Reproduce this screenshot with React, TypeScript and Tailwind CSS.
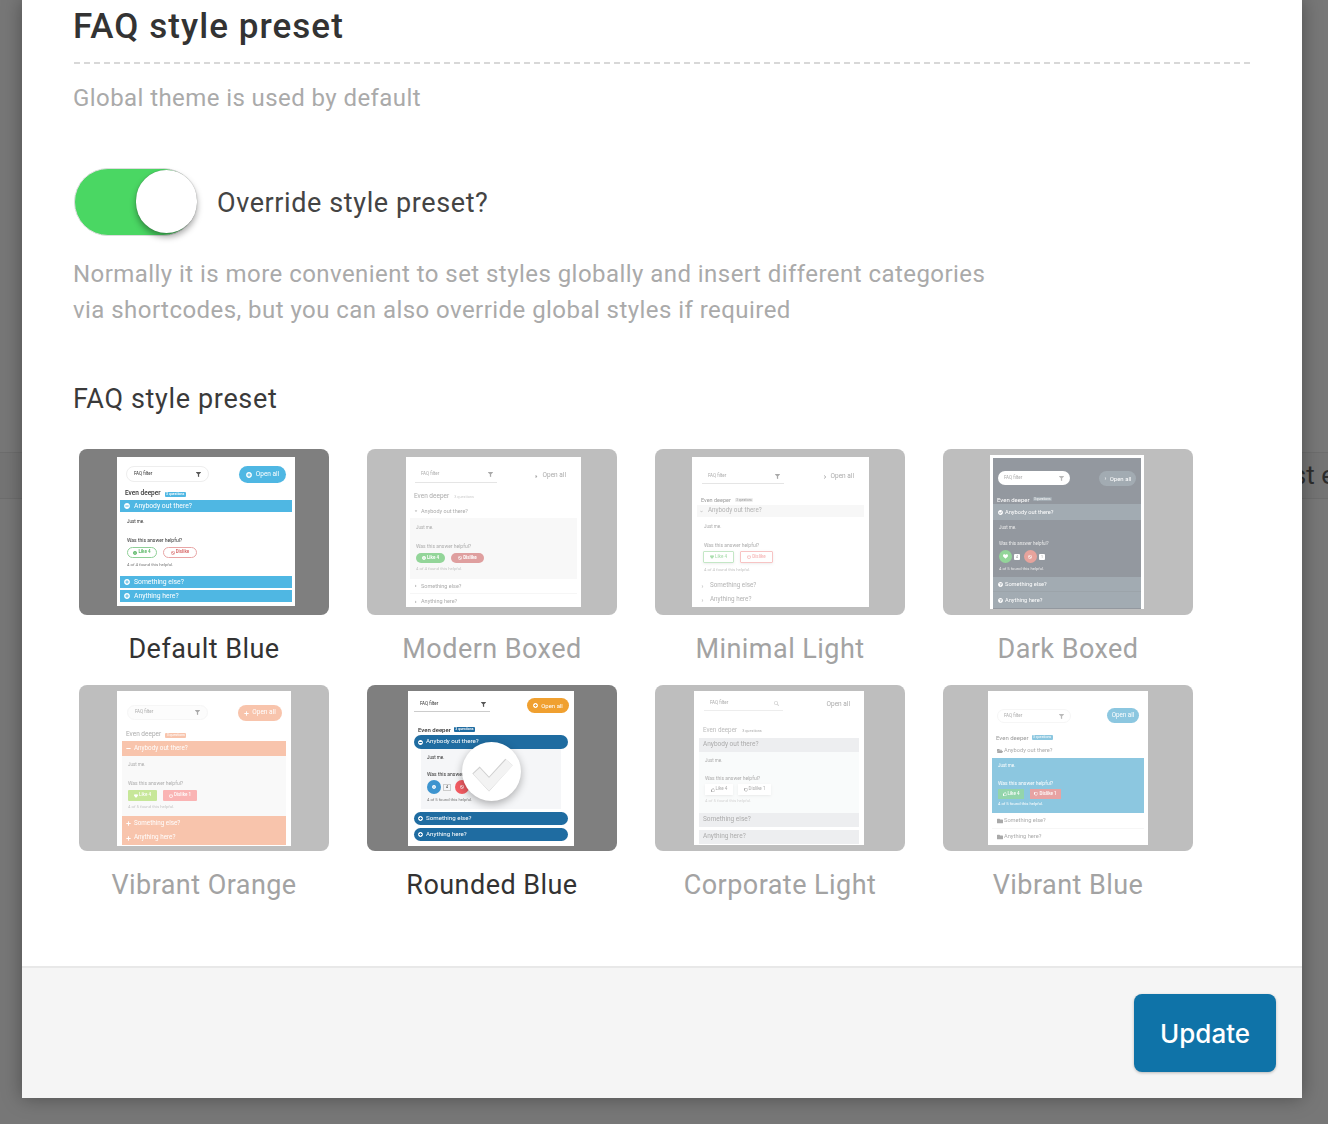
import type { ReactNode } from "react";
import {
  FaBan,
  FaCaretDown,
  FaCaretRight,
  FaCheckCircle,
  FaChevronDown,
  FaChevronRight,
  FaFilter,
  FaFolder,
  FaFolderOpen,
  FaHeart,
  FaMinus,
  FaMinusCircle,
  FaPlus,
  FaPlusCircle,
  FaPowerOff,
  FaQuestionCircle,
  FaRegThumbsDown,
  FaRegThumbsUp,
  FaSearch,
  FaSmile,
} from "react-icons/fa";

type BoxProps = { className?: string; children?: ReactNode };

// one line of small text inside a preview
const Tx = ({ className = "", children }: BoxProps) => (
  <div className={`h-[6px] leading-[6px] whitespace-nowrap ${className}`}>{children}</div>
);

// horizontal row: accordion bars, buttons, filters
const Row = ({ className = "", children }: BoxProps) => (
  <div className={`flex items-center whitespace-nowrap ${className}`}>{children}</div>
);

function Tile({ label, active, className, children }: { label: string; active?: boolean; className: string; children: ReactNode }) {
  return (
    <div className="w-[250px]">
      <div className={`relative h-[166px] overflow-hidden rounded-lg bg-[#7f7f7f] blur-[0.3px] ${active ? "" : "opacity-50"} ${className}`}>
        {children}
      </div>
      <div className={`mt-[19px] text-center text-[27px] leading-[30px] tracking-[0.45px] ${active ? "text-[#333]" : "text-[#a3a3a3]"}`}>
        {label}
      </div>
    </div>
  );
}

function DefaultBlue() {
  return (
    <div className="h-[149px] w-[178px] bg-white pt-[9px] text-[#333]">
      <div className="flex pr-[9px] pl-[9px]">
        <Row className="h-[16px] w-[83px] justify-between rounded-full border border-[#eee] px-[7px] text-[4.5px]">
          FAQ filter <FaFilter size={5} className="text-[#555]" />
        </Row>
        <Row className="ml-auto h-[17px] w-[47px] justify-center gap-[4px] rounded-full bg-[#4fb7e3] text-[6.5px] text-white">
          <FaPlusCircle size={6} /> Open all
        </Row>
      </div>
      <Row className="mt-[7px] h-[8px] gap-[4px] pl-[8px] text-[6.5px] font-medium">
        Even deeper <span className="rounded-[1px] bg-[#4fb7e3] px-[1.5px] text-[3.5px] leading-[5px] text-white">3 questions</span>
      </Row>
      <Row className="mx-[3px] mt-[2px] h-[12px] gap-[4px] bg-[#4fb7e3] pl-[4px] text-[6.8px] text-white">
        <FaMinusCircle size={6} /> Anybody out there?
      </Row>
      <Tx className="mt-[7px] pl-[10px] text-[4.5px]">Just me.</Tx>
      <Tx className="mt-[12px] pl-[10px] text-[5px]">Was this answer helpful?</Tx>
      <div className="mt-[4px] flex gap-[6px] pl-[10px] text-[4.5px] font-bold">
        <Row className="h-[11px] w-[30px] justify-center gap-[1px] rounded-full border border-[#8fd097] text-[#5cb868]">
          <FaSmile size={4} /> Like 4
        </Row>
        <Row className="h-[11px] w-[34px] justify-center gap-[1px] rounded-full border border-[#e8a5a5] text-[#d97070]">
          <FaBan size={4} /> Dislike
        </Row>
      </div>
      <Tx className="mt-[4px] pl-[10px] text-[4.3px] text-[#777]">4 of 4 found this helpful.</Tx>
      <Row className="mx-[3px] mt-[8px] h-[12px] gap-[4px] bg-[#4fb7e3] pl-[4px] text-[6.8px] text-white">
        <FaPlusCircle size={6} /> Something else?
      </Row>
      <Row className="mx-[3px] mt-[2px] h-[12px] gap-[4px] bg-[#4fb7e3] pl-[4px] text-[6.8px] text-white">
        <FaPlusCircle size={6} /> Anything here?
      </Row>
    </div>
  );
}

function ModernBoxed() {
  return (
    <div className="h-[150px] w-[175px] bg-white pt-[10px] text-[#555]">
      <div className="flex pr-[15px] pl-[9px]">
        <Row className="h-[16px] w-[82px] justify-between border-b border-[#ccc] pr-[4px] pl-[6px] text-[4.5px]">
          FAQ filter <FaFilter size={5} />
        </Row>
        <Row className="ml-auto h-[18px] gap-[4px] text-[6.5px]">
          <FaCaretRight size={5} /> Open all
        </Row>
      </div>
      <Row className="mt-[8px] h-[8px] gap-[5px] pl-[8px] text-[6.5px]">
        Even deeper <span className="text-[3.8px] text-[#999]">3 questions</span>
      </Row>
      <Row className="mt-[3px] h-[14px] gap-[3px] pl-[8px] text-[5.5px]">
        <FaCaretDown size={4} /> Anybody out there?
      </Row>
      <div className="mx-[4px] h-[61px] bg-[#f3f3f3] pt-[7px] pl-[6px]">
        <Tx className="text-[4.5px]">Just me.</Tx>
        <Tx className="mt-[12px] text-[5px]">Was this answer helpful?</Tx>
        <div className="mt-[4px] flex gap-[6px] text-[4.5px] font-bold text-white">
          <Row className="h-[10px] w-[29px] justify-center gap-[1px] rounded-full bg-[#29ad35]">
            <FaSmile size={4} /> Like 4
          </Row>
          <Row className="h-[10px] w-[33px] justify-center gap-[1px] rounded-full bg-[#c14141]">
            <FaBan size={4} /> Dislike
          </Row>
        </div>
        <Tx className="mt-[3px] text-[4.3px] text-[#888]">4 of 4 found this helpful.</Tx>
      </div>
      <Row className="mx-[4px] h-[15px] gap-[3px] border-b border-[#eee] pl-[4px] text-[5.5px]">
        <FaCaretRight size={4} /> Something else?
      </Row>
      <Row className="mx-[4px] h-[15px] gap-[3px] pl-[4px] text-[5.5px]">
        <FaCaretRight size={4} /> Anything here?
      </Row>
    </div>
  );
}

function MinimalLight() {
  return (
    <div className="h-[150px] w-[177px] bg-white pt-[12px] text-[#555]">
      <div className="flex pr-[15px] pl-[10px]">
        <Row className="h-[15px] w-[82px] justify-between border-b border-[#ccc] pr-[4px] pl-[6px] text-[4.5px]">
          FAQ filter <FaFilter size={5} />
        </Row>
        <Row className="ml-auto h-[16px] gap-[4px] text-[6.5px]">
          <FaChevronRight size={4} /> Open all
        </Row>
      </div>
      <Row className="mt-[11px] h-[8px] gap-[4px] pl-[9px] text-[5.5px] text-[#333]">
        Even deeper <span className="rounded-[1px] bg-[#ddd] px-[1.5px] text-[3px] leading-[4px]">3 questions</span>
      </Row>
      <Row className="mx-[5px] mt-[1px] h-[12px] gap-[5px] bg-[#f0f0f0] pl-[3px] text-[6.3px] text-[#666]">
        <FaChevronDown size={3} /> Anybody out there?
      </Row>
      <Tx className="mt-[7px] pl-[12px] text-[4.5px]">Just me.</Tx>
      <Tx className="mt-[12px] pl-[12px] text-[5px]">Was this answer helpful?</Tx>
      <div className="mt-[3px] flex gap-[6px] pl-[11px] text-[4.5px] font-medium">
        <Row className="h-[12px] w-[31px] justify-center gap-[1px] rounded-[1px] border border-[#8bd08f] text-[#5cc064] shadow-sm">
          <FaHeart size={4} /> Like 4
        </Row>
        <Row className="h-[12px] w-[33px] justify-center gap-[1px] rounded-[1px] border border-[#f08a8a] text-[#ee6a6a] shadow-sm">
          <FaPowerOff size={4} /> Dislike
        </Row>
      </div>
      <Tx className="mt-[4px] pl-[12px] text-[4.3px] text-[#888]">4 of 4 found this helpful.</Tx>
      <Row className="mt-[7px] h-[12px] gap-[6px] pl-[9px] text-[6.3px] text-[#666]">
        <FaChevronRight size={3} /> Something else?
      </Row>
      <Row className="mt-[2px] h-[12px] gap-[6px] pl-[9px] text-[6.3px] text-[#666]">
        <FaChevronRight size={3} /> Anything here?
      </Row>
    </div>
  );
}

function DarkBoxed() {
  return (
    <div className="w-[154px] border-x-[3px] border-t-[3px] border-white bg-[#293341] text-white">
      <div className="h-[151px] pt-[13px]">
        <div className="flex pr-[5px] pl-[5px]">
          <Row className="h-[14px] w-[72px] justify-between rounded-full bg-white px-[6px] text-[4.5px] text-[#555]">
            FAQ filter <FaFilter size={5} className="text-[#777]" />
          </Row>
          <Row className="ml-auto h-[15px] w-[37px] justify-center gap-[3px] rounded-full bg-[#475967] text-[6px]">
            <FaChevronRight size={3} /> Open all
          </Row>
        </div>
        <Row className="mt-[9px] h-[8px] gap-[3px] pl-[4px] text-[6px]">
          Even deeper <span className="rounded-[1px] bg-[#475967] px-[1.5px] text-[3.2px] leading-[4px]">3 questions</span>
        </Row>
        <Row className="mt-[1px] h-[16px] gap-[2px] bg-[#475967] pl-[5px] text-[5.7px]">
          <FaCheckCircle size={5} /> Anybody out there?
        </Row>
        <Tx className="mt-[5px] pl-[6px] text-[4.5px] text-[#ddd]">Just me.</Tx>
        <Tx className="mt-[10px] pl-[6px] text-[4.5px] text-[#ddd]">Was this answer helpful?</Tx>
        <div className="mt-[3px] flex items-center pl-[6px]">
          <Row className="h-[13px] w-[13px] justify-center rounded-full bg-[#29ad35]">
            <FaHeart size={5} />
          </Row>
          <span className="ml-[2px] rounded-[1px] bg-white px-[2px] text-[3.5px] leading-[6px] text-[#333]">4</span>
          <Row className="ml-[4px] h-[13px] w-[13px] justify-center rounded-full bg-[#d14a3c]">
            <FaBan size={4} />
          </Row>
          <span className="ml-[2px] rounded-[1px] bg-white px-[2px] text-[3.5px] leading-[6px] text-[#333]">1</span>
        </div>
        <Tx className="mt-[3px] pl-[6px] text-[4.2px] text-[#ddd]">4 of 5 found this helpful.</Tx>
        <Row className="mt-[5px] h-[15px] gap-[2px] border-b border-[#3c4c58] bg-[#475967] pl-[5px] text-[5.7px]">
          <FaQuestionCircle size={5} /> Something else?
        </Row>
        <Row className="h-[16px] gap-[2px] bg-[#475967] pl-[5px] text-[5.7px]">
          <FaQuestionCircle size={5} /> Anything here?
        </Row>
      </div>
    </div>
  );
}

function VibrantOrange() {
  return (
    <div className="h-[155px] w-[174px] bg-white pt-[14px] text-[#555]">
      <div className="flex pr-[9px] pl-[10px]">
        <Row className="h-[15px] w-[81px] justify-between rounded-full border border-[#eee] bg-[#fafafa] px-[7px] text-[4.5px]">
          FAQ filter <FaFilter size={5} />
        </Row>
        <Row className="ml-auto h-[16px] w-[44px] justify-center gap-[3px] rounded-full bg-[#f38b5b] text-[6.5px] text-white">
          <FaPlus size={5} /> Open all
        </Row>
      </div>
      <Row className="mt-[10px] h-[8px] gap-[4px] pl-[9px] text-[6.5px]">
        Even deeper <span className="rounded-[1px] bg-[#f38b5b] px-[1.5px] text-[3.5px] leading-[5px] text-white">3 questions</span>
      </Row>
      <Row className="mx-[5px] mt-[2px] h-[15px] gap-[3px] bg-[#f38b5b] pl-[4px] text-[6.3px] text-white">
        <FaMinus size={5} /> Anybody out there?
      </Row>
      <div className="mx-[5px] h-[60px] bg-[#f5f5f5] pt-[6px] pl-[6px]">
        <Tx className="text-[4.5px]">Just me.</Tx>
        <Tx className="mt-[12px] text-[5px]">Was this answer helpful?</Tx>
        <div className="mt-[4px] flex gap-[6px] text-[4.5px] font-medium text-white">
          <Row className="h-[11px] w-[29px] justify-center gap-[1px] rounded-[1px] bg-[#91d135]">
            <FaHeart size={4} /> Like 4
          </Row>
          <Row className="h-[11px] w-[34px] justify-center gap-[1px] rounded-[1px] bg-[#f76b6b]">
            <FaPowerOff size={4} /> Dislike 1
          </Row>
        </div>
        <Tx className="mt-[3px] text-[4.3px] text-[#888]">4 of 5 found this helpful.</Tx>
      </div>
      <Row className="mx-[5px] h-[15px] gap-[3px] bg-[#f38b5b] pl-[4px] text-[6.3px] text-white">
        <FaPlus size={5} /> Something else?
      </Row>
      <Row className="mx-[5px] h-[14px] gap-[3px] bg-[#f38b5b] pl-[4px] text-[6.3px] text-white">
        <FaPlus size={5} /> Anything here?
      </Row>
    </div>
  );
}

function RoundedBlue() {
  return (
    <div className="h-[155px] w-[166px] bg-white pt-[7px] text-[#333]">
      <div className="flex pr-[5px] pl-[6px]">
        <Row className="h-[14px] w-[76px] justify-between border-b border-[#ccc] pr-[4px] pl-[6px] text-[4.5px]">
          FAQ filter <FaFilter size={5} className="text-[#555]" />
        </Row>
        <Row className="ml-auto h-[15px] w-[42px] justify-center gap-[3px] rounded-full bg-[#f0a030] text-[6px] text-white">
          <FaPlusCircle size={5} /> Open all
        </Row>
      </div>
      <Row className="mt-[12px] h-[8px] gap-[3px] pl-[10px] text-[6px] font-medium">
        Even deeper <span className="rounded-[1px] bg-[#1f6ca1] px-[1.5px] text-[3.5px] leading-[5px] text-white">3 questions</span>
      </Row>
      <Row className="mx-[6px] mt-[2px] h-[14px] gap-[3px] rounded-full bg-[#1f6ca1] pl-[4px] text-[6.2px] text-white">
        <FaMinusCircle size={5} /> Anybody out there?
      </Row>
      <div className="mx-[13px] h-[60px] bg-[#f5f6f8] pt-[6px] pl-[6px]">
        <Tx className="text-[4.5px]">Just me.</Tx>
        <Tx className="mt-[10px] text-[5px]">Was this answer helpful?</Tx>
        <div className="mt-[3px] flex items-center text-[3.5px]">
          <Row className="h-[14px] w-[14px] justify-center rounded-full bg-[#3d94cf] text-white">
            <FaSmile size={4} />
          </Row>
          <span className="ml-[2px] border border-[#ccc] px-[2px] leading-[5px]">4</span>
          <Row className="ml-[4px] h-[14px] w-[14px] justify-center rounded-full bg-[#f25b62] text-white">
            <FaBan size={4} />
          </Row>
        </div>
        <Tx className="mt-[3px] text-[4.2px] text-[#777]">4 of 5 found this helpful.</Tx>
      </div>
      <Row className="mx-[6px] mt-[3px] h-[13px] gap-[3px] rounded-full bg-[#1f6ca1] pl-[4px] text-[6.2px] text-white">
        <FaPlusCircle size={5} /> Something else?
      </Row>
      <Row className="mx-[6px] mt-[3px] h-[13px] gap-[3px] rounded-full bg-[#1f6ca1] pl-[4px] text-[6.2px] text-white">
        <FaPlusCircle size={5} /> Anything here?
      </Row>
    </div>
  );
}

function CorporateLight() {
  return (
    <div className="h-[154px] w-[170px] bg-white pt-[6px] text-[#555]">
      <div className="flex pr-[14px] pl-[10px]">
        <Row className="h-[14px] w-[79px] justify-between border-b border-[#ddd] pr-[4px] pl-[6px] text-[4.5px]">
          FAQ filter <FaSearch size={5} className="text-[#aaa]" />
        </Row>
        <Row className="ml-auto h-[16px] text-[6.5px]">Open all</Row>
      </div>
      <Row className="mt-[14px] h-[8px] gap-[5px] pl-[9px] text-[6.3px] text-[#777]">
        Even deeper <span className="text-[3.8px] text-[#555]">3 questions</span>
      </Row>
      <Row className="mx-[5px] mt-[3px] h-[14px] bg-[#dddfe3] pl-[4px] text-[6.5px]">Anybody out there?</Row>
      <div className="mx-[5px] h-[61px] bg-[#f5f8f8] pt-[6px] pl-[6px]">
        <Tx className="text-[4.5px]">Just me.</Tx>
        <Tx className="mt-[11px] text-[5px]">Was this answer helpful?</Tx>
        <div className="mt-[3px] flex gap-[5px] text-[4.5px]">
          <Row className="h-[11px] w-[28px] justify-center gap-[1px] bg-white shadow-sm">
            <FaRegThumbsUp size={4} /> Like 4
          </Row>
          <Row className="h-[11px] w-[33px] justify-center gap-[1px] bg-white shadow-sm">
            <FaRegThumbsDown size={4} /> Dislike 1
          </Row>
        </div>
        <Tx className="mt-[3px] text-[4.3px] text-[#aaa]">4 of 5 found this helpful.</Tx>
      </div>
      <Row className="mx-[5px] h-[14px] bg-[#dddfe3] pl-[4px] text-[6.5px]">Something else?</Row>
      <Row className="mx-[5px] mt-[3px] h-[14px] bg-[#dddfe3] pl-[4px] text-[6.5px]">Anything here?</Row>
    </div>
  );
}

function VibrantBlue() {
  return (
    <div className="h-[154px] w-[160px] bg-white pt-[17px] text-[#555]">
      <div className="flex pr-[9px] pl-[9px]">
        <Row className="mt-[1px] h-[14px] w-[74px] justify-between rounded-full border border-[#eee] px-[6px] text-[4.5px]">
          FAQ filter <FaFilter size={5} className="text-[#777]" />
        </Row>
        <Row className="ml-auto h-[15px] w-[32px] justify-center rounded-full bg-[#1b91c3] text-[6.3px] text-white">Open all</Row>
      </div>
      <Row className="mt-[10px] h-[8px] gap-[3px] pl-[8px] text-[6px] text-[#333]">
        Even deeper <span className="rounded-[1px] bg-[#1b91c3] px-[1.5px] text-[3.5px] leading-[5px] text-white">3 questions</span>
      </Row>
      <Row className="mt-[2px] h-[15px] gap-[1px] pl-[9px] text-[5.7px]">
        <FaFolderOpen size={6} /> Anybody out there?
      </Row>
      <div className="mx-[4px] h-[55px] bg-[#1b91c3] pt-[5px] pl-[6px] text-white">
        <Tx className="text-[4.5px]">Just me.</Tx>
        <Tx className="mt-[11px] text-[5px]">Was this answer helpful?</Tx>
        <div className="mt-[3px] flex gap-[6px] text-[4.5px] font-medium">
          <Row className="h-[10px] w-[26px] justify-center gap-[1px] bg-[#29ad5a]">
            <FaRegThumbsUp size={4} /> Like 4
          </Row>
          <Row className="h-[10px] w-[31px] justify-center gap-[1px] bg-[#d14a4a]">
            <FaRegThumbsDown size={4} /> Dislike 1
          </Row>
        </div>
        <Tx className="mt-[2px] text-[4.2px]">4 of 5 found this helpful.</Tx>
      </div>
      <Row className="mx-[4px] h-[16px] gap-[1px] border-b border-[#eee] pl-[5px] text-[5.7px]">
        <FaFolder size={6} /> Something else?
      </Row>
      <Row className="mx-[4px] h-[15px] gap-[1px] pl-[5px] text-[5.7px]">
        <FaFolder size={6} /> Anything here?
      </Row>
    </div>
  );
}

export default function App() {
  return (
    <div className="relative h-[1124px] w-[1328px] overflow-hidden bg-[#777] font-[Roboto,sans-serif]">
      {/* page behind the modal */}
      <div className="mt-[452px] flex h-[47px] items-center justify-end overflow-hidden border-y border-[#6d6d6d] bg-[#747474] text-[26px] text-[#2c2c2c]">
        <span className="mr-[-7px] whitespace-nowrap">st e</span>
      </div>

      <div className="absolute top-0 left-[22px] flex h-[1098px] w-[1280px] flex-col bg-white shadow-[0_0_18px_rgba(0,0,0,0.35)]">
        <div className="flex-1 px-[52px]">
          <h1 className="-ml-[1px] pt-[7px] text-[35px] leading-[40px] font-medium tracking-[1.05px] text-[#333]">FAQ style preset</h1>
          <div className="mt-[15px] border-t-2 border-dashed border-[#d8d8d8]" />
          <p className="-ml-[1px] mt-[20px] text-[24px] leading-[28px] tracking-[0.42px] text-[#aaa]">Global theme is used by default</p>

          <div className="mt-[56px] flex items-center">
            <div className="relative h-[68px] w-[123px] rounded-full border border-[#ddd] bg-[#4ad763]">
              <div className="absolute top-[1px] right-[-1px] h-[63px] w-[61px] rounded-full bg-white shadow-[0_4px_6px_rgba(0,0,0,0.35),0_0_1px_rgba(0,0,0,0.4)]" />
            </div>
            <span className="mt-[3px] ml-[20px] text-[27px] tracking-[0.6px] text-[#444]">Override style preset?</span>
          </div>

          <p className="-ml-[1px] mt-[20px] text-[24px] leading-[36px] tracking-[0.45px] text-[#aaa]">
            Normally it is more convenient to set styles globally and insert different categories
            <br />
            via shortcodes, but you can also override global styles if required
          </p>

          <h2 className="-ml-[1px] mt-[55px] text-[27px] leading-[32px] font-normal tracking-[0.65px] text-[#3a3a3a]">FAQ style preset</h2>

          <div className="mt-[34px] ml-[5px] grid grid-cols-[repeat(4,250px)] gap-x-[38px] gap-y-[21px]">
            <Tile label="Default Blue" active className="pt-[8px] pl-[38px]">
              <DefaultBlue />
            </Tile>
            <Tile label="Modern Boxed" className="pt-[8px] pl-[39px]">
              <ModernBoxed />
            </Tile>
            <Tile label="Minimal Light" className="pt-[8px] pl-[37px]">
              <MinimalLight />
            </Tile>
            <Tile label="Dark Boxed" className="pt-[6px] pl-[47px]">
              <DarkBoxed />
            </Tile>
            <Tile label="Vibrant Orange" className="pt-[6px] pl-[38px]">
              <VibrantOrange />
            </Tile>
            <Tile label="Rounded Blue" active className="pt-[6px] pl-[41px]">
              <RoundedBlue />
              {/* selected mark */}
              <div className="absolute top-[57px] left-[95px] h-[59px] w-[59px] rounded-full bg-white shadow-[0_3px_8px_rgba(0,0,0,0.3)]">
                <svg viewBox="0 0 59 59" className="h-[59px] w-[59px]">
                  <polyline points="14,28 27,42 47,20" fill="none" stroke="#d0d0d0" strokeWidth="10" />
                  <polyline points="14.5,29 27,42.5 47.5,20.5" fill="none" stroke="#f3f3f3" strokeWidth="9" />
                </svg>
              </div>
            </Tile>
            <Tile label="Corporate Light" className="pt-[6px] pl-[39px]">
              <CorporateLight />
            </Tile>
            <Tile label="Vibrant Blue" className="pt-[6px] pl-[45px]">
              <VibrantBlue />
            </Tile>
          </div>
        </div>

        <div className="flex h-[132px] items-center justify-end border-t-2 border-[#e8e8e8] bg-[#f5f5f5] pr-[26px]">
          <button className="h-[78px] w-[142px] rounded-lg bg-[#0f73a8] font-[Inter,sans-serif] text-[26px] font-medium text-white shadow-[0_1px_3px_rgba(0,0,0,0.25)]">
            Update
          </button>
        </div>
      </div>
    </div>
  );
}
